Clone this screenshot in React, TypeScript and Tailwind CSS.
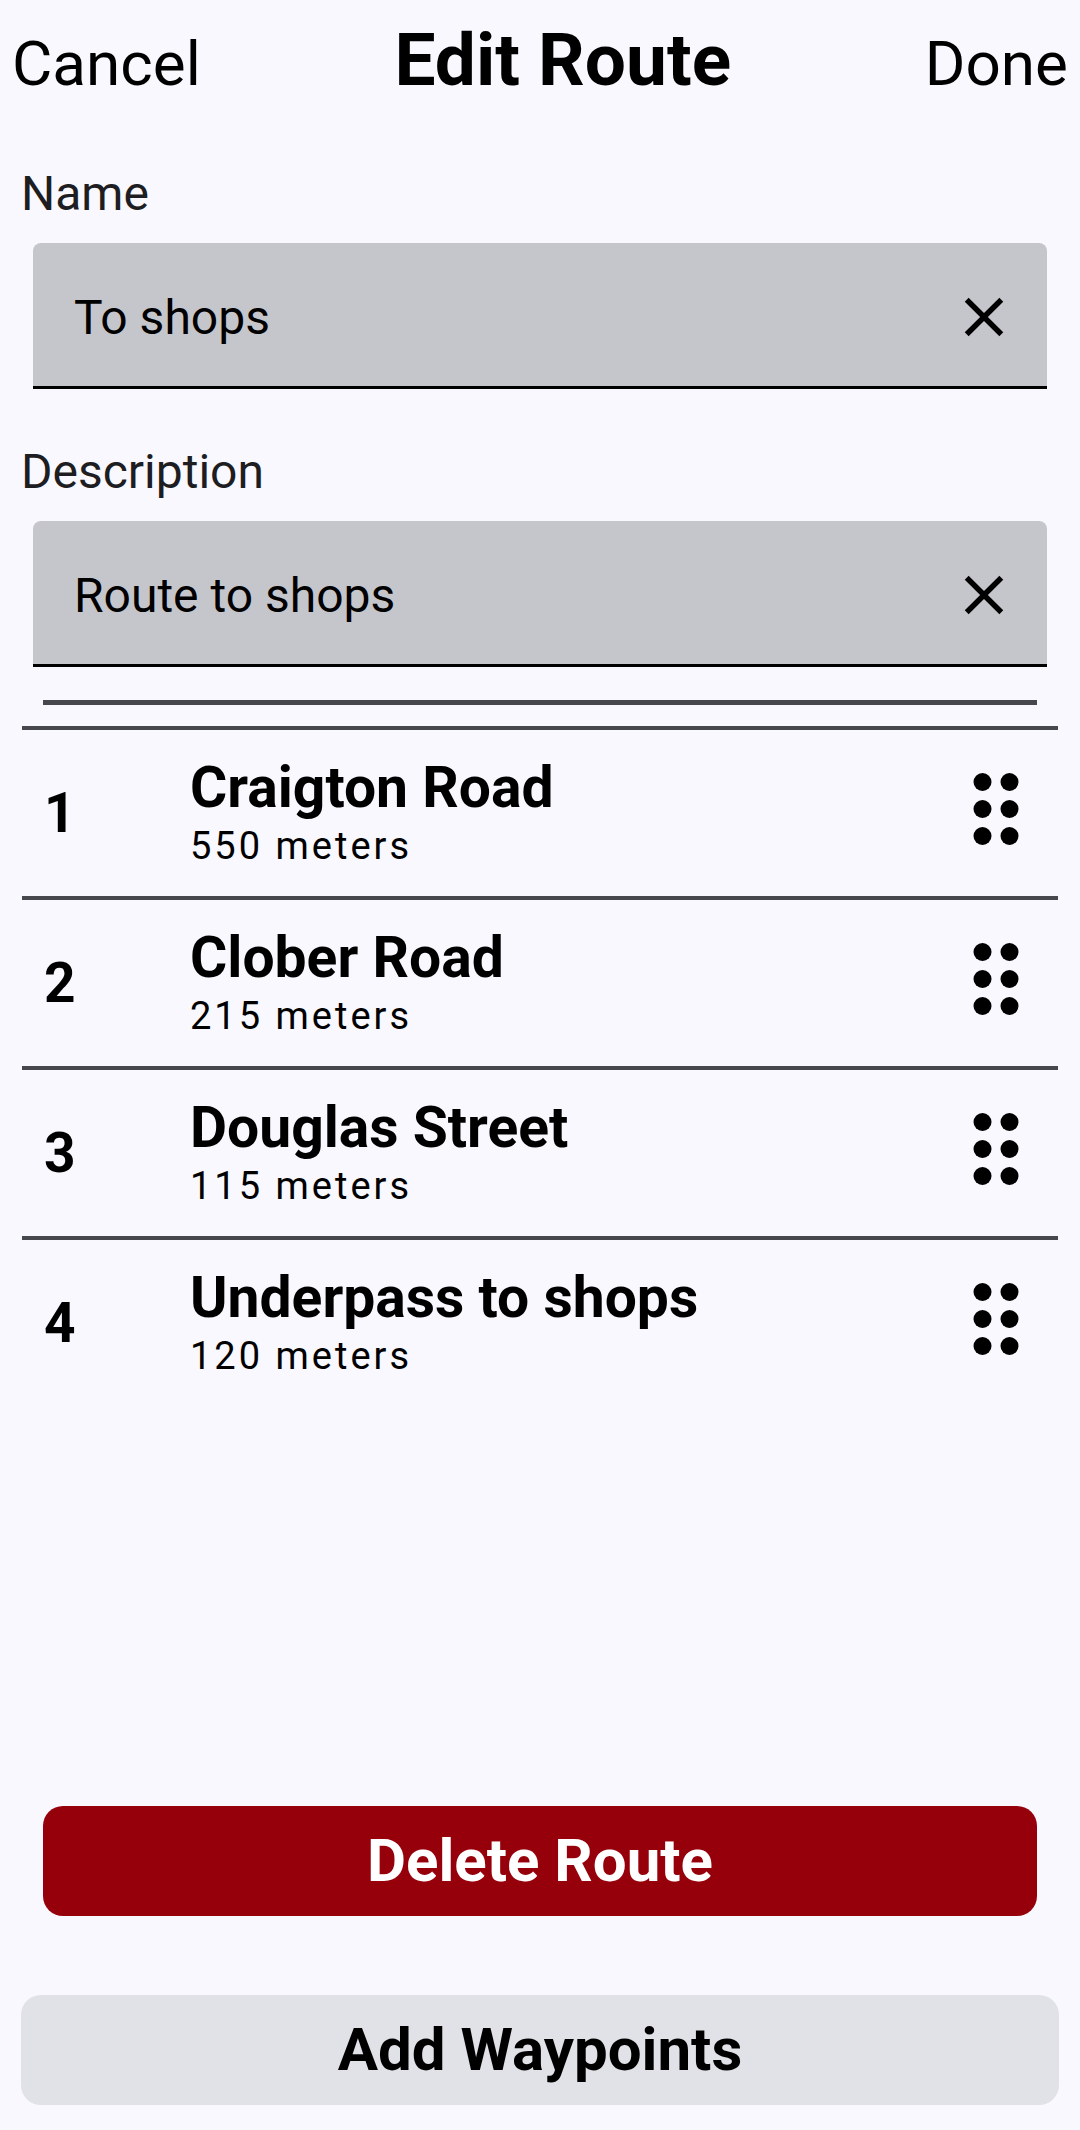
import React from 'react';

interface Waypoint {
  id: number;
  name: string;
  distance: string;
}

const waypoints: Waypoint[] = [
  { id: 1, name: 'Craigton Road', distance: '550 meters' },
  { id: 2, name: 'Clober Road', distance: '215 meters' },
  { id: 3, name: 'Douglas Street', distance: '115 meters' },
  { id: 4, name: 'Underpass to shops', distance: '120 meters' },
];

const CloseIcon: React.FC = () => (
  <svg width="66" height="66" viewBox="0 0 24 24" fill="#000">
    <path d="M19 6.41L17.59 5 12 10.59 6.41 5 5 6.41 10.59 12 5 17.59 6.41 19 12 13.41 17.59 19 19 17.59 13.41 12z" />
  </svg>
);

const DragIcon: React.FC = () => (
  <svg width="108" height="108" viewBox="0 0 24 24" fill="#000">
    <circle cx="9" cy="6" r="2" />
    <circle cx="15" cy="6" r="2" />
    <circle cx="9" cy="12" r="2" />
    <circle cx="15" cy="12" r="2" />
    <circle cx="9" cy="18" r="2" />
    <circle cx="15" cy="18" r="2" />
  </svg>
);

const TextField: React.FC<{ value: string }> = ({ value }) => (
  <div className="mx-[33px] mt-[22px] h-[146px] flex items-center justify-between bg-[#c5c6cb] rounded-t-[8px] border-b-[3px] border-black pl-[41px] pr-[30px]">
    <span className="text-[48px] leading-[48px] pt-[6px] text-black">{value}</span>
    <div className="pt-[4px]">
      <CloseIcon />
    </div>
  </div>
);

const App: React.FC = () => {
  return (
    <div className="w-[1080px] h-[2130px] flex flex-col bg-[#f8f8fe] font-['Roboto',sans-serif]">
      {/* Header */}
      <div className="flex items-baseline justify-between pt-[20px] pl-[12px] pr-[12px]">
        <button className="text-[62px] leading-[80px] text-black">Cancel</button>
        <h1 className="text-[73px] leading-[80px] font-bold text-black">Edit Route</h1>
        <button className="text-[62px] leading-[80px] text-black">Done</button>
      </div>

      {/* Name */}
      <label className="mt-[63px] ml-[21px] text-[48px] leading-[54px] text-[#1d1d22]">Name</label>
      <TextField value="To shops" />

      {/* Description */}
      <label className="mt-[56px] ml-[21px] text-[48px] leading-[54px] text-[#1d1d22]">Description</label>
      <TextField value="Route to shops" />

      <div className="mt-[33px] mx-[43px] h-[5px] bg-[#47484e]" />

      {/* Waypoints */}
      <div className="mt-[21px] mx-[22px]">
        {waypoints.map((wp) => (
          <div key={wp.id}>
            <div className="h-[4px] bg-[#47484e]" />
            <div className="h-[166px] flex items-center">
              <div className="w-[168px] pl-[22px] text-[55px] leading-[55px] font-bold text-black">{wp.id}</div>
              <div className="flex flex-col pt-[6px]">
                <span className="text-[57px] leading-[60px] font-bold text-black">{wp.name}</span>
                <span className="text-[38px] leading-[56px] tracking-[3px] text-black">{wp.distance}</span>
              </div>
              <div className="ml-auto mr-[8px] mb-[8px]">
                <DragIcon />
              </div>
            </div>
          </div>
        ))}
      </div>

      <div className="flex-1" />

      {/* Actions */}
      <button className="mx-[43px] h-[110px] rounded-[20px] bg-[#96000b] text-white text-[60px] leading-[60px] font-bold">
        Delete Route
      </button>
      <button className="mt-[79px] mb-[25px] mx-[21px] h-[110px] rounded-[20px] bg-[#e1e2e7] text-black text-[60px] leading-[60px] font-bold">
        Add Waypoints
      </button>
    </div>
  );
};

export default App;
